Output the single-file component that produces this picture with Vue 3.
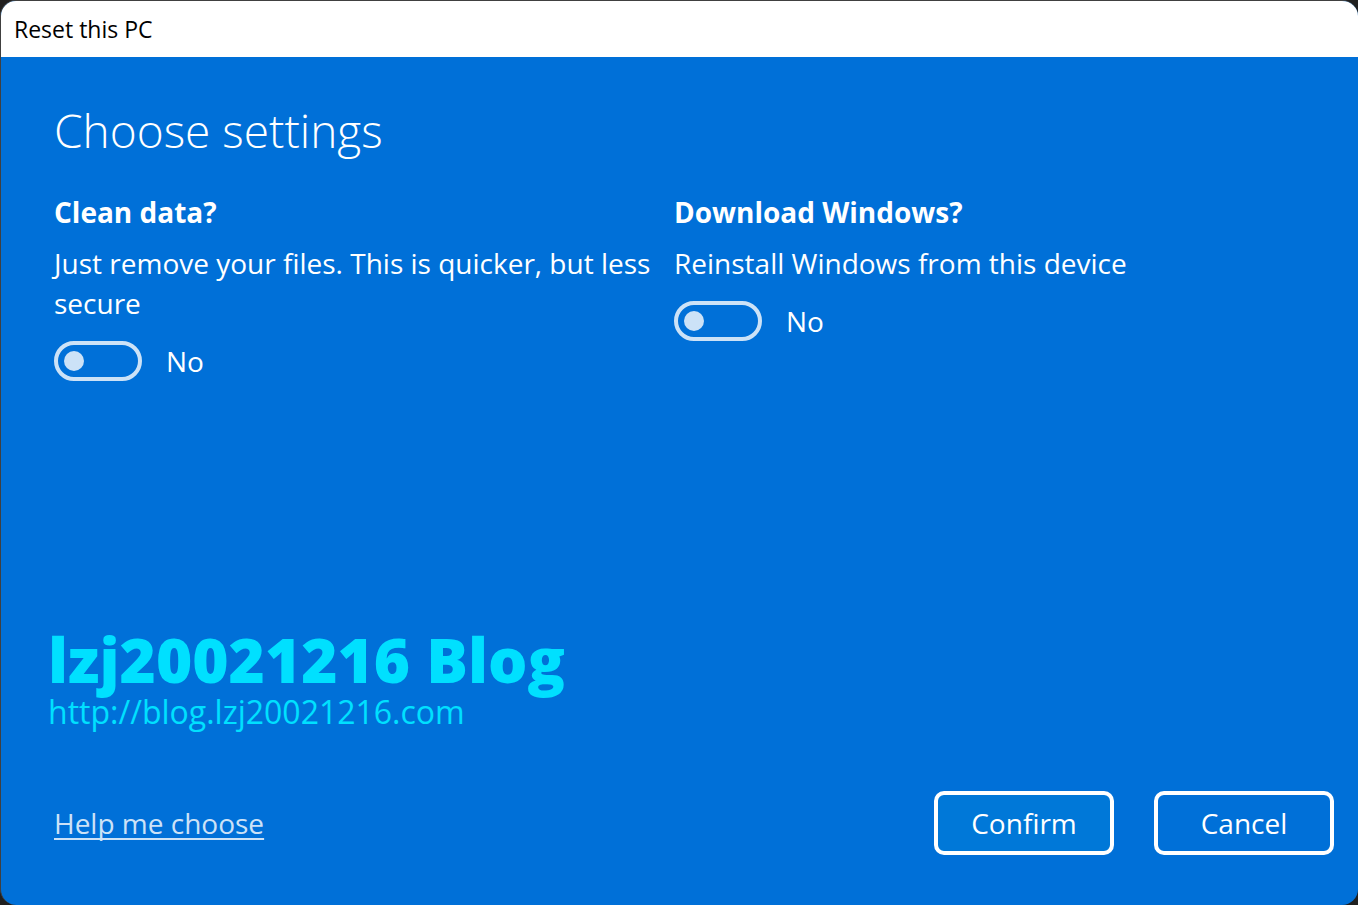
<script setup>
import { ref } from 'vue'

const cleanData = ref(false)
const downloadWindows = ref(false)
</script>

<template>
  <main class="window">
    <header class="titlebar">Reset this PC</header>
    <section class="body">
      <h1>Choose settings</h1>
      <div class="settings">
        <div class="setting">
          <h2>Clean data?</h2>
          <p id="clean-text">Just remove your files. This is quicker, but less secure</p>
          <label class="toggle">
            <input v-model="cleanData" type="checkbox" role="switch" aria-describedby="clean-text" />
            <span>{{ cleanData ? 'Yes' : 'No' }}</span>
          </label>
        </div>
        <div class="setting">
          <h2>Download Windows?</h2>
          <p id="download-text">Reinstall Windows from this device</p>
          <label class="toggle">
            <input v-model="downloadWindows" type="checkbox" role="switch" aria-describedby="download-text" />
            <span>{{ downloadWindows ? 'Yes' : 'No' }}</span>
          </label>
        </div>
      </div>
      <div class="blog">
        <strong>lzj20021216 Blog</strong>
        <span>http://blog.lzj20021216.com</span>
      </div>
      <footer>
        <a href="#help">Help me choose</a>
        <div class="actions">
          <button class="primary" type="button">Confirm</button>
          <button type="button">Cancel</button>
        </div>
      </footer>
    </section>
  </main>
</template>

<style>
body {
  background: #202020;
}
</style>

<style scoped>
.window {
  box-sizing: border-box;
  min-height: 100vh;
  display: flex;
  flex-direction: column;
  border: 1px solid #404040;
  border-width: 1px 0 0 1px;
  border-radius: 16px;
  overflow: hidden;
  background: #0070d8;
  color: #fff;
  font-family: "Open Sans", "Noto Sans", sans-serif;
  font-size: 28px;
  line-height: 40px;
}
.titlebar {
  padding: 8px 13px;
  background: #fff;
  color: #000;
  font-size: 23px;
}
.body {
  flex: 1;
  display: flex;
  flex-direction: column;
  padding: 43px 24px 50px 53px;
}
h1 {
  margin: 0;
  font-size: 46px;
  font-weight: 300;
  line-height: 60px;
}
.settings {
  display: grid;
  grid-template-columns: 1fr 1fr;
  gap: 10px;
  margin-top: 32px;
  margin-right: 50px;
}
h2 {
  margin: 0 0 11px;
  font-size: 28px;
  font-weight: 700;
  line-height: 40px;
}
p {
  margin: 0;
}
.toggle {
  display: inline-flex;
  align-items: center;
  gap: 24px;
  margin-top: 18px;
}
.toggle input {
  appearance: none;
  box-sizing: border-box;
  display: flex;
  align-items: center;
  width: 88px;
  height: 40px;
  margin: 0;
  padding: 0 6px;
  border: 4px solid #cce2f7;
  border-radius: 20px;
}
.toggle input::before {
  content: "";
  width: 20px;
  height: 20px;
  border-radius: 50%;
  background: #cce2f7;
}
.toggle input:checked {
  justify-content: flex-end;
}
.blog {
  display: flex;
  flex-direction: column;
  margin-top: auto;
  margin-left: -6px;
  margin-bottom: 58px;
  color: #00e0ff;
  font-size: 32px;
  line-height: 42px;
}
.blog strong {
  font-size: 62px;
  font-weight: 800;
  line-height: 64px;
}
footer {
  display: flex;
  align-items: center;
  justify-content: space-between;
}
a {
  color: #cce2f7;
  text-decoration-thickness: 2px;
  text-decoration-skip-ink: none;
  text-underline-offset: 4px;
}
.actions {
  display: flex;
  gap: 40px;
}
button {
  box-sizing: border-box;
  width: 180px;
  height: 64px;
  padding: 0;
  border: 4px solid #fff;
  border-radius: 10px;
  background: #0070d8;
  color: #fff;
  font: inherit;
}
.primary {
  background: #0078d8;
}
</style>
